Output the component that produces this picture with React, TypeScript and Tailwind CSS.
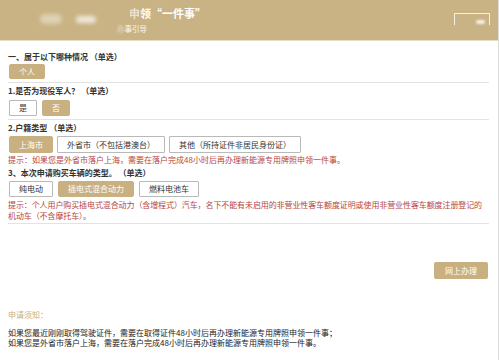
import React from "react";

const font = { fontFamily: '"Noto Sans CJK SC", "Noto Sans", sans-serif' };

function Opt({ label, active }: { label: string; active?: boolean }) {
  return (
    <span
      className={
        active
          ? "h-full px-[9px] flex items-center bg-[#c9b080] text-white rounded-[2px] border border-[#c9b080]"
          : "h-full px-[9px] flex items-center bg-white text-[#333] border border-[#b9b9b9] rounded-[1px]"
      }
    >
      {label}
    </span>
  );
}

export default function App() {
  return (
    <div className="w-[499px] h-[360px] bg-white overflow-hidden text-[8px] text-[#333] border-r border-[#dcdcdc]" style={font}>
      {/* header */}
      <div className="relative h-[41px] bg-[#c9b384] border-b border-[#e7dcc6]">
        <div className="absolute left-[40px] top-[10px] w-[70px] h-[18px] flex items-center gap-[14px] blur-[2px]">
          <span className="w-[22px] h-[10px] bg-white/40 rounded-full" />
          <span className="w-[20px] h-[7px] bg-white/70 rounded-full" />
        </div>
        <div className="absolute left-[129px] top-[6px] text-white text-[11px] leading-[14px] font-bold">
          <span className="opacity-60">申</span>领“一件事”
        </div>
        <div className="absolute left-[117px] top-[24px] text-white/90 text-[7.5px] leading-[10px]">
          <span className="blur-[1px] opacity-70">办</span>事引导
        </div>
        <div className="absolute left-[454px] top-[13px] w-[36px] h-[12px] border border-white/80 border-b-0" />
        <div className="absolute left-[476px] top-[20px] w-[9px] h-[4px] bg-white/80 rounded-full blur-[1px]" />
      </div>

      <div className="pl-2 pr-[9px]">
        {/* section 1 */}
        <div className="border-b border-[#e3e3e3] pb-[3px]">
          <div className="mt-[11px] leading-[10px] font-bold">一、属于以下哪种情况 （单选）</div>
          <div className="mt-[2px] h-[15px] flex ml-px">
            <Opt label="个人" active />
          </div>
        </div>

        {/* section 2 */}
        <div className="border-b border-[#e3e3e3] pb-[3px]">
          <div className="mt-[3px] leading-[10px] font-bold">1.是否为现役军人？ （单选）</div>
          <div className="mt-[4px] h-[16px] flex gap-[5px] ml-px">
            <Opt label="是" />
            <Opt label="否" active />
          </div>
        </div>

        {/* section 3 */}
        <div className="border-b border-[#e3e3e3] pb-[2px]">
          <div className="mt-[3px] leading-[10px] font-bold">2.户籍类型 （单选）</div>
          <div className="mt-[3px] h-[17px] flex gap-[4px] ml-px">
            <Opt label="上海市" active />
            <Opt label="外省市（不包括港澳台）" />
            <Opt label="其他（所持证件非居民身份证）" />
          </div>
          <div className="mt-[1px] leading-[11px] text-[#b8453b]">
            提示：如果您是外省市落户上海，需要在落户完成48小时后再办理新能源专用牌照申领一件事。
          </div>
          <div className="mt-[2px] leading-[11px] font-bold">3、本次申请购买车辆的类型。 （单选）</div>
          <div className="mt-[3px] h-[16px] flex gap-[5px] ml-px">
            <Opt label="纯电动" />
            <Opt label="插电式混合动力" active />
            <Opt label="燃料电池车" />
          </div>
          <div className="mt-[2px] leading-[11px] text-[#b8453b] tracking-[-0.1px]">
            提示：个人用户购买插电式混合动力（含增程式）汽车，名下不能有未启用的非营业性客车额度证明或使用非营业性客车额度注册登记的
            <br />
            机动车（不含摩托车）。
          </div>
        </div>

        <div className="flex justify-end mt-[38px]">
          <span className="h-[17px] w-[54px] flex items-center justify-center bg-[#c9b080] text-white rounded-[2px] mr-px">
            网上办理
          </span>
        </div>

        <div className="mt-[31px] leading-[10px] text-[#c9b080]">申请须知：</div>
        <div className="mt-[8px] leading-[10px] text-[#222]">
          如果您最近刚刚取得驾驶证件，需要在取得证件48小时后再办理新能源专用牌照申领一件事；
          <br />
          如果您是外省市落户上海，需要在落户完成48小时后再办理新能源专用牌照申领一件事。
        </div>
      </div>
    </div>
  );
}
